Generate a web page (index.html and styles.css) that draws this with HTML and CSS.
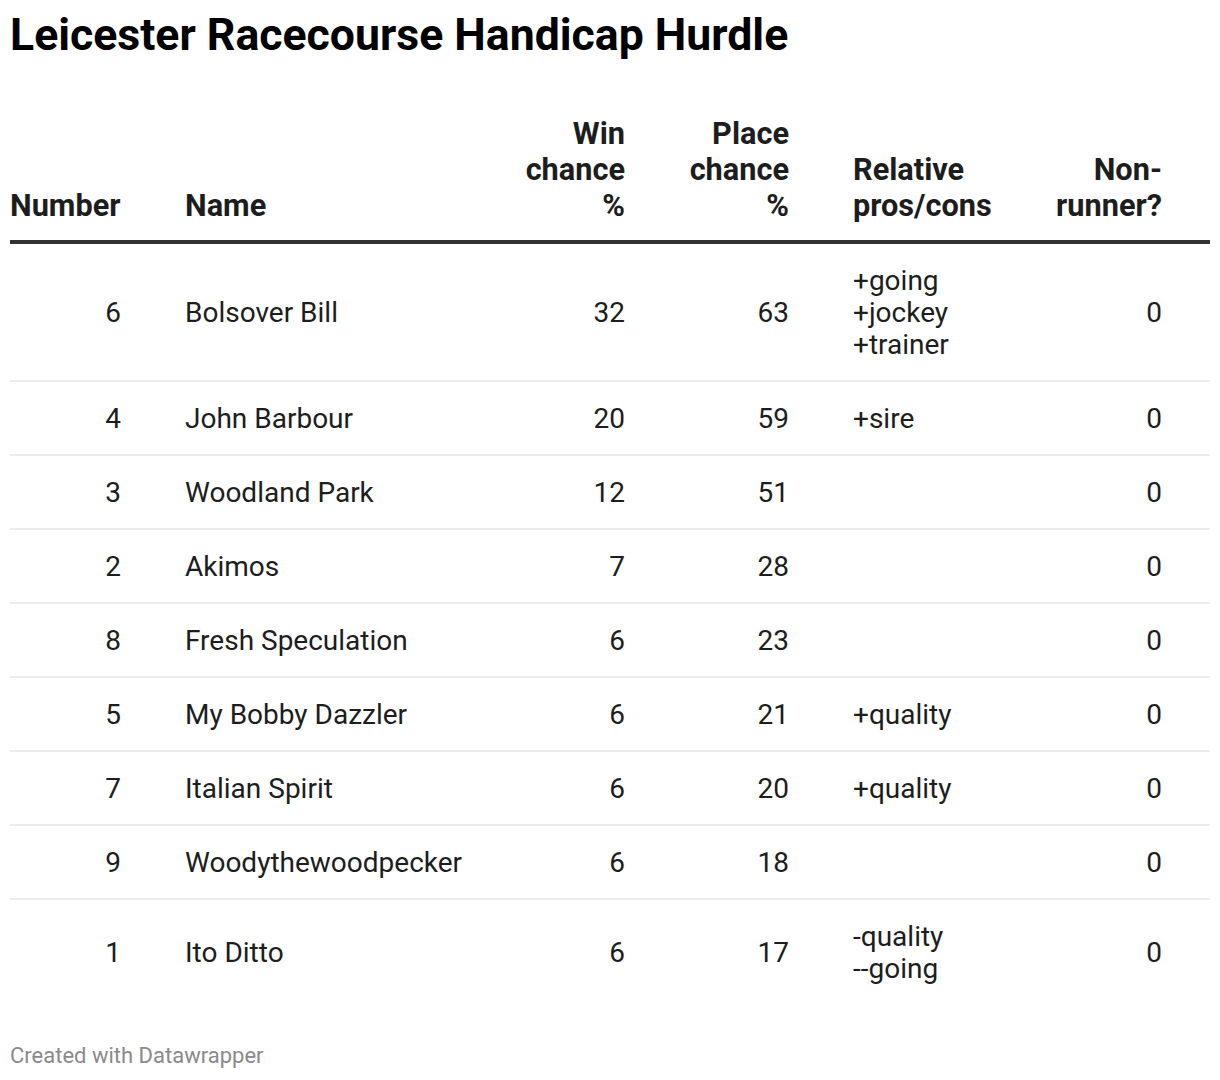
FILE: index.html
```html
<!DOCTYPE html>
<html lang="en">
<head>
<meta charset="utf-8">
<title>Leicester Racecourse Handicap Hurdle</title>
<link rel="stylesheet" href="styles.css">
</head>
<body>
<div class="chart">
  <h1 class="title">Leicester Racecourse Handicap Hurdle</h1>
  <table class="tbl">
    <colgroup>
      <col class="w-num"><col class="w-name"><col class="w-win"><col class="w-place"><col class="w-rel"><col class="w-nr">
    </colgroup>
    <thead>
      <tr>
        <th class="c-num">Number</th>
        <th class="c-name">Name</th>
        <th class="c-win">Win<br>chance<br>%</th>
        <th class="c-place">Place<br>chance<br>%</th>
        <th class="c-rel">Relative<br>pros/cons</th>
        <th class="c-nr">Non-<br>runner?</th>
      </tr>
    </thead>
    <tbody>
      <tr><td class="c-num">6</td><td class="c-name">Bolsover Bill</td><td class="c-win">32</td><td class="c-place">63</td><td class="c-rel">+going<br>+jockey<br>+trainer</td><td class="c-nr">0</td></tr>
      <tr><td class="c-num">4</td><td class="c-name">John Barbour</td><td class="c-win">20</td><td class="c-place">59</td><td class="c-rel">+sire</td><td class="c-nr">0</td></tr>
      <tr><td class="c-num">3</td><td class="c-name">Woodland Park</td><td class="c-win">12</td><td class="c-place">51</td><td class="c-rel"></td><td class="c-nr">0</td></tr>
      <tr><td class="c-num">2</td><td class="c-name">Akimos</td><td class="c-win">7</td><td class="c-place">28</td><td class="c-rel"></td><td class="c-nr">0</td></tr>
      <tr><td class="c-num">8</td><td class="c-name">Fresh Speculation</td><td class="c-win">6</td><td class="c-place">23</td><td class="c-rel"></td><td class="c-nr">0</td></tr>
      <tr><td class="c-num">5</td><td class="c-name">My Bobby Dazzler</td><td class="c-win">6</td><td class="c-place">21</td><td class="c-rel">+quality</td><td class="c-nr">0</td></tr>
      <tr><td class="c-num">7</td><td class="c-name">Italian Spirit</td><td class="c-win">6</td><td class="c-place">20</td><td class="c-rel">+quality</td><td class="c-nr">0</td></tr>
      <tr><td class="c-num">9</td><td class="c-name">Woodythewoodpecker</td><td class="c-win">6</td><td class="c-place">18</td><td class="c-rel"></td><td class="c-nr">0</td></tr>
      <tr class="last"><td class="c-num">1</td><td class="c-name">Ito Ditto</td><td class="c-win">6</td><td class="c-place">17</td><td class="c-rel">-quality<br>--going</td><td class="c-nr">0</td></tr>
    </tbody>
  </table>
  <div class="footer">Created with Datawrapper</div>
</div>
</body>
</html>
```

FILE: styles.css
```css
* { box-sizing: border-box; }
html, body { margin: 0; padding: 0; background: #fff; }
body {
  font-family: Roboto, "Liberation Sans", sans-serif;
  color: #1d1d1d;
}
.chart {
  padding: 10px 10px 0 10px;
  width: 1220px;
}
.title {
  margin: 0;
  font-size: 44.6px;
  line-height: 50px;
  font-weight: 700;
  color: #000;
}
.tbl {
  margin-top: 56px;
  width: 1200px;
  border-collapse: collapse;
  table-layout: fixed;
}
.w-num { width: 111px; }
.w-name { width: 374px; }
.w-win { width: 130px; }
.w-place { width: 164px; }
.w-rel { width: 211px; }
.w-nr { width: 210px; }

th {
  font-weight: 700;
  font-size: 30.7px;
  line-height: 36px;
  vertical-align: bottom;
  padding: 0 0 16px 0;
  border-bottom: 4px solid #333;
  color: #1d1d1d;
}
td {
  font-size: 28px;
  line-height: 32px;
  padding: 21px 0 19px 0;
  vertical-align: middle;
  border-bottom: 2px solid #ececec;
  color: #1d1d1d;
}
tr.last td { border-bottom: none; }

.c-num { text-align: right; }
th.c-num { text-align: left; }
.c-name { text-align: left; padding-left: 64px; }
.c-win { text-align: right; }
.c-place { text-align: right; }
.c-rel { text-align: left; padding-left: 64px; }
.c-nr { text-align: right; padding-right: 48px; }
td.c-nr { padding-right: 48px; }

.footer {
  margin-top: 40px;
  font-size: 22px;
  line-height: 24px;
  color: #8a8a8a;
}
```
